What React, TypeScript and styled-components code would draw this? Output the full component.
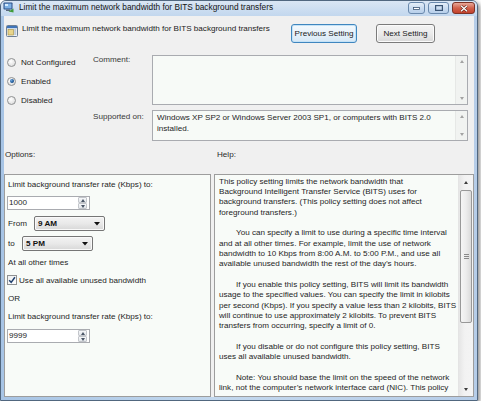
import React from "react";
import styled, { createGlobalStyle, css } from "styled-components";

const FONT = `"Liberation Sans", Arial, "Noto Sans", sans-serif`;

const Global = createGlobalStyle`
  html, body { margin: 0; padding: 0; background: #ffffff; }
  body { font-family: ${FONT}; font-size: 8.1px; color: #1e1e1e; }
  * { box-sizing: border-box; }
`;

/* ---------- window chrome ---------- */

const Window = styled.div`
  width: 478px;
  height: 401px;
  display: flex;
  flex-direction: column;
  border: 1px solid #51677f;
  border-radius: 6px 6px 0 0;
  background: linear-gradient(90deg, #a7c4e5 0%, #c3d8ee 45%, #b6cde8 100%);
  box-shadow: 2px 2px 4px rgba(0, 0, 0, 0.45);
  overflow: hidden;
`;

const TitleBar = styled.div`
  height: 15px;
  display: flex;
  align-items: flex-start;
  padding-left: 2px;
  background: linear-gradient(180deg, #dae6f4 0%, #c2d7ee 100%);
`;

const TitleIcon = styled.svg`
  width: 11px;
  height: 11px;
  margin-top: 1px;
  flex: none;
`;

const TitleText = styled.span`
  margin-left: 5px;
  line-height: 13px;
  font-size: 8.3px;
  color: #141414;
  white-space: nowrap;
`;

const CaptionButtons = styled.div`
  margin-left: auto;
  margin-top: 1px;
  padding-right: 2px;
  display: flex;
  gap: 3px;
`;

const CaptionButton = styled.div<{ $w: number; $close?: boolean }>`
  width: ${(p) => p.$w}px;
  height: 12px;
  display: flex;
  align-items: center;
  justify-content: center;
  border-radius: 3px;
  ${(p) =>
    p.$close
      ? css`
          border: 1px solid #7d3226;
          background: linear-gradient(180deg, #e8a99a 0%, #d2624c 50%, #c2412c 100%);
        `
      : css`
          border: 1px solid #6a89ad;
          background: linear-gradient(180deg, #e6eff9 0%, #cadcf0 50%, #b8cfea 100%);
        `}
`;

const Client = styled.div`
  flex: 1;
  min-height: 0;
  margin: 0 3px 3px 3px;
  background: #f0f0f0;
  display: flex;
  flex-direction: column;
`;

/* ---------- header ---------- */

const HeaderRow = styled.div`
  display: flex;
  align-items: flex-start;
  padding: 8px 39px 0 2px;
  height: 27px;
`;

const HeaderIcon = styled.svg`
  width: 12px;
  height: 12px;
  margin-top: 1px;
  flex: none;
`;

const HeaderText = styled.span`
  margin-left: 4px;
  flex: 1;
  line-height: 10px;
  white-space: nowrap;
  color: #222;
`;

const NavButtons = styled.div`
  display: flex;
  gap: 19px;
`;

const NavButton = styled.div<{ $w: number; $focused?: boolean }>`
  width: ${(p) => p.$w}px;
  height: 19px;
  display: flex;
  align-items: center;
  justify-content: center;
  border-radius: 3px;
  white-space: nowrap;
  color: #1a1a1a;
  ${(p) =>
    p.$focused
      ? css`
          border: 1px solid #3f86bf;
          background: linear-gradient(180deg, #f4f9fd 0%, #e7f1fa 50%, #d6e8f6 100%);
          box-shadow: inset 0 0 0 1px #c4e2f6;
        `
      : css`
          border: 1px solid #7b7b7b;
          background: linear-gradient(180deg, #f4f4f4 0%, #ebebeb 50%, #d9d9d9 100%);
          box-shadow: inset 0 0 0 1px #fbfbfb;
        `}
`;

/* ---------- state radios and fields ---------- */

const TopSection = styled.div`
  display: flex;
  margin-top: 12px;
`;

const RadioGroup = styled.div`
  width: 89px;
  padding-left: 3px;
  display: flex;
  flex-direction: column;
  gap: 5px;
`;

const RadioItem = styled.div`
  height: 14px;
  display: flex;
  align-items: center;
  gap: 5px;
  white-space: nowrap;
`;

const RadioCircle = styled.span<{ $checked?: boolean }>`
  width: 9px;
  height: 9px;
  border-radius: 50%;
  border: 1px solid #8f9192;
  background: radial-gradient(circle at 40% 35%, #ffffff 0%, #e6e6e6 60%, #cfd1d2 100%);
  display: flex;
  align-items: center;
  justify-content: center;
  flex: none;
  &::after {
    content: "";
    display: ${(p) => (p.$checked ? "block" : "none")};
    width: 4px;
    height: 4px;
    border-radius: 50%;
    background: radial-gradient(circle at 35% 35%, #6fa6dc 0%, #1d5a9b 55%, #0f3361 100%);
  }
`;

const FieldGrid = styled.div`
  display: grid;
  grid-template-columns: 59px 316px;
  row-gap: 5px;
`;

const FieldLabel = styled.div<{ $pt: number }>`
  padding-top: ${(p) => p.$pt}px;
  line-height: 10px;
  color: #383838;
  white-space: nowrap;
`;

const FieldBox = styled.div<{ $h: number }>`
  height: ${(p) => p.$h}px;
  border: 1px solid #a9abb0;
  background: #f7faf7;
  display: flex;
`;

const FieldText = styled.div`
  flex: 1;
  padding: 2px 0 0 4px;
  line-height: 10.5px;
  white-space: nowrap;
  color: #1e1e1e;
`;

const MiniScroll = styled.div`
  width: 12px;
  margin-left: auto;
  display: flex;
  flex-direction: column;
  justify-content: space-between;
  align-items: center;
  padding: 4px 0 4px;
  background: #f1f3f1;
  border-left: 1px solid #e6e8e6;
`;

const Arrow = styled.span<{ $dir: "up" | "down"; $color?: string }>`
  width: 0;
  height: 0;
  border-left: 2.5px solid transparent;
  border-right: 2.5px solid transparent;
  ${(p) =>
    p.$dir === "up"
      ? css`border-bottom: 3px solid ${p.$color ?? "#a3a3a3"};`
      : css`border-top: 3px solid ${p.$color ?? "#a3a3a3"};`}
`;

/* ---------- options and help ---------- */

const LabelsRow = styled.div`
  display: grid;
  grid-template-columns: 207px 1fr;
  column-gap: 3px;
  margin-top: 9px;
  line-height: 10px;
`;

const SectionLabel = styled.div<{ $pl: number }>`
  padding-left: ${(p) => p.$pl}px;
  color: #2a2a2a;
`;

const Panels = styled.div`
  flex: 1;
  min-height: 0;
  display: grid;
  grid-template-columns: 207px 1fr;
  column-gap: 3px;
  margin-top: 14px;
`;

const OptionsPanel = styled.div`
  border: 1px solid #9d9d9d;
  background: #f8fbf8;
  padding: 5px 3px 0 3px;
  display: flex;
  flex-direction: column;
`;

const OptionLine = styled.div<{ $mt?: number }>`
  margin-top: ${(p) => p.$mt ?? 0}px;
  line-height: 10px;
  white-space: nowrap;
  color: #1e1e1e;
`;

const Spin = styled.div<{ $mt: number }>`
  margin-top: ${(p) => p.$mt}px;
  margin-left: -1px;
  width: 83px;
  height: 14px;
  border: 1px solid #a9abb0;
  background: #ffffff;
  display: flex;
  align-items: center;
`;

const SpinValue = styled.span`
  flex: 1;
  padding-left: 1px;
  line-height: 12px;
`;

const SpinButtons = styled.div`
  width: 9px;
  height: 12px;
  margin-right: 2px;
  display: flex;
  flex-direction: column;
`;

const SpinHalf = styled.div`
  flex: 1;
  display: flex;
  align-items: center;
  justify-content: center;
  border: 1px solid #c3c6cb;
  border-radius: 1px;
  background: linear-gradient(180deg, #f6f7f9 0%, #e3e6ea 100%);
`;

const ComboRow = styled.div<{ $mt: number }>`
  margin-top: ${(p) => p.$mt}px;
  display: flex;
  align-items: center;
  height: 15px;
`;

const ComboLabel = styled.span<{ $w: number }>`
  width: ${(p) => p.$w}px;
  flex: none;
`;

const Combo = styled.div`
  width: 71px;
  height: 15px;
  border: 1px solid #767676;
  border-radius: 2px;
  background: linear-gradient(180deg, #f3f3f3 0%, #e9e9e9 50%, #d7d7d7 100%);
  box-shadow: inset 0 0 0 1px #f9f9f9;
  display: flex;
  align-items: center;
  padding: 0 4px 0 3px;
  font-weight: 700;
  color: #111;
`;

const ComboValue = styled.span`
  flex: 1;
`;

const CheckRow = styled.div<{ $mt: number }>`
  margin-top: ${(p) => p.$mt}px;
  margin-left: -1px;
  height: 10px;
  display: flex;
  align-items: center;
  gap: 2px;
  white-space: nowrap;
`;

const CheckBox = styled.span`
  width: 10px;
  height: 10px;
  flex: none;
  border: 1px solid #8f9192;
  background: linear-gradient(135deg, #eceef0 0%, #ffffff 100%);
  display: flex;
  align-items: center;
  justify-content: center;
`;

const HelpPanel = styled.div`
  border: 1px solid #9d9d9d;
  background: #f8fbf8;
  display: flex;
  overflow: hidden;
`;

const HelpText = styled.div`
  flex: 1;
  min-width: 0;
  padding: 1.5px 0 0 4px;
  overflow: hidden;
`;

const HelpLine = styled.div<{ $indent?: boolean }>`
  height: 10.35px;
  line-height: 10.35px;
  white-space: nowrap;
  padding-left: ${(p) => (p.$indent ? 17 : 0)}px;
  color: #1e1e1e;
`;

const ScrollBar = styled.div`
  width: 15px;
  flex: none;
  display: flex;
  flex-direction: column;
  background: linear-gradient(90deg, #e6e6e6 0%, #f2f2f2 40%, #f4f4f4 100%);
  border-left: 1px solid #e4e4e4;
`;

const ScrollArrow = styled.div`
  height: 14px;
  display: flex;
  align-items: center;
  justify-content: center;
`;

const Thumb = styled.div`
  margin: 1px 1px 0 1px;
  height: 133px;
  border: 1px solid #989898;
  border-radius: 2px;
  background: linear-gradient(90deg, #f5f5f5 0%, #ececec 50%, #dadada 100%);
  display: flex;
  flex-direction: column;
  align-items: center;
  justify-content: center;
  gap: 1px;
`;

const Grip = styled.span`
  width: 5px;
  height: 1px;
  background: #8a8a8a;
`;

const Track = styled.div`
  flex: 1;
`;

/* ---------- content ---------- */

const helpLines: { text: string; indent?: boolean }[] = [
  { text: "This policy setting limits the network bandwidth that" },
  { text: "Background Intelligent Transfer Service (BITS) uses for" },
  { text: "background transfers. (This policy setting does not affect" },
  { text: "foreground transfers.)" },
  { text: "" },
  { text: "You can specify a limit to use during a specific time interval", indent: true },
  { text: "and at all other times. For example, limit the use of network" },
  { text: "bandwidth to 10 Kbps from 8:00 A.M. to 5:00 P.M., and use all" },
  { text: "available unused bandwidth the rest of the day\u2019s hours." },
  { text: "" },
  { text: "If you enable this policy setting, BITS will limit its bandwidth", indent: true },
  { text: "usage to the specified values. You can specify the limit in kilobits" },
  { text: "per second (Kbps). If you specify a value less than 2 kilobits, BITS" },
  { text: "will continue to use approximately 2 kilobits. To prevent BITS" },
  { text: "transfers from occurring, specify a limit of 0." },
  { text: "" },
  { text: "If you disable or do not configure this policy setting, BITS", indent: true },
  { text: "uses all available unused bandwidth." },
  { text: "" },
  { text: "Note: You should base the limit on the speed of the network", indent: true },
  { text: "link, not the computer\u2019s network interface card (NIC). This policy" },
];

const PolicyIcon = () => (
  <TitleIcon viewBox="0 0 11 11">
    <rect x="0.5" y="0.5" width="9" height="7" rx="0.8" fill="#2b4f86" />
    <rect x="1.5" y="1.5" width="7" height="5" fill="#7fb2e5" />
    <rect x="2" y="2" width="3" height="2" fill="#d6ecff" />
    <rect x="3" y="7.5" width="4" height="1.5" fill="#5a6a7c" />
    <path d="M5.5 9.5 L10.5 6.5 L10.5 10.5 Z" fill="#3f9b3a" />
  </TitleIcon>
);

const SettingIcon = () => (
  <HeaderIcon viewBox="0 0 12 12">
    <rect x="0.5" y="0.5" width="11" height="11" rx="1" fill="#eef2f6" stroke="#6d7f94" />
    <rect x="1" y="1" width="10" height="2.2" fill="#3f74b8" />
    <rect x="2" y="4.5" width="5.5" height="5.5" fill="#e8d58c" stroke="#a08a3a" strokeWidth="0.6" />
    <rect x="8.2" y="4.5" width="2" height="1" fill="#8aa0b8" />
    <rect x="8.2" y="6.5" width="2" height="1" fill="#8aa0b8" />
    <rect x="8.2" y="8.5" width="2" height="1" fill="#8aa0b8" />
  </HeaderIcon>
);

const SpinControl = ({ value, mt }: { value: string; mt: number }) => (
  <Spin $mt={mt}>
    <SpinValue>{value}</SpinValue>
    <SpinButtons>
      <SpinHalf>
        <Arrow $dir="up" $color="#4a5566" />
      </SpinHalf>
      <SpinHalf>
        <Arrow $dir="down" $color="#4a5566" />
      </SpinHalf>
    </SpinButtons>
  </Spin>
);

const ComboArrow = () => (
  <svg width="6" height="4" viewBox="0 0 6 4">
    <path d="M0 0 H6 L3 3.5 Z" fill="#111" />
  </svg>
);

export default function App() {
  return (
    <>
      <Global />
      <Window>
        <TitleBar>
          <PolicyIcon />
          <TitleText>Limit the maximum network bandwidth for BITS background transfers</TitleText>
          <CaptionButtons>
            <CaptionButton $w={17}>
              <svg width="7" height="3" viewBox="0 0 7 3">
                <rect x="0.5" y="0.5" width="6" height="2" fill="#ffffff" stroke="#3b5575" strokeWidth="0.8" />
              </svg>
            </CaptionButton>
            <CaptionButton $w={21}>
              <svg width="8" height="6" viewBox="0 0 8 6">
                <rect x="0.6" y="0.6" width="6.8" height="4.8" fill="none" stroke="#3b5575" strokeWidth="1.2" />
              </svg>
            </CaptionButton>
            <CaptionButton $w={23} $close>
              <svg width="8" height="7" viewBox="0 0 8 7">
                <path d="M1 0.8 L7 6.2 M7 0.8 L1 6.2" stroke="#5a1f17" strokeWidth="2.4" />
                <path d="M1 0.8 L7 6.2 M7 0.8 L1 6.2" stroke="#ffffff" strokeWidth="1.3" />
              </svg>
            </CaptionButton>
          </CaptionButtons>
        </TitleBar>

        <Client>
          <HeaderRow>
            <SettingIcon />
            <HeaderText>Limit the maximum network bandwidth for BITS background transfers</HeaderText>
            <NavButtons>
              <NavButton $w={66} $focused>Previous Setting</NavButton>
              <NavButton $w={59}>Next Setting</NavButton>
            </NavButtons>
          </HeaderRow>

          <TopSection>
            <RadioGroup>
              <RadioItem>
                <RadioCircle />
                Not Configured
              </RadioItem>
              <RadioItem>
                <RadioCircle $checked />
                Enabled
              </RadioItem>
              <RadioItem>
                <RadioCircle />
                Disabled
              </RadioItem>
            </RadioGroup>

            <FieldGrid>
              <FieldLabel $pt={0}>Comment:</FieldLabel>
              <FieldBox $h={50}>
                <MiniScroll>
                  <Arrow $dir="up" />
                  <Arrow $dir="down" />
                </MiniScroll>
              </FieldBox>
              <FieldLabel $pt={2}>Supported on:</FieldLabel>
              <FieldBox $h={31}>
                <FieldText>
                  Windows XP SP2 or Windows Server 2003 SP1, or computers with BITS 2.0
                  <br />
                  installed.
                </FieldText>
                <MiniScroll>
                  <Arrow $dir="up" />
                  <Arrow $dir="down" />
                </MiniScroll>
              </FieldBox>
            </FieldGrid>
          </TopSection>

          <LabelsRow>
            <SectionLabel $pl={1}>Options:</SectionLabel>
            <SectionLabel $pl={3}>Help:</SectionLabel>
          </LabelsRow>

          <Panels>
            <OptionsPanel>
              <OptionLine>Limit background transfer rate (Kbps) to:</OptionLine>
              <SpinControl value="1000" mt={6} />
              <ComboRow $mt={6}>
                <ComboLabel $w={26}>From</ComboLabel>
                <Combo>
                  <ComboValue>9 AM</ComboValue>
                  <ComboArrow />
                </Combo>
              </ComboRow>
              <ComboRow $mt={5}>
                <ComboLabel $w={14}>to</ComboLabel>
                <Combo>
                  <ComboValue>5 PM</ComboValue>
                  <ComboArrow />
                </Combo>
              </ComboRow>
              <OptionLine $mt={7}>At all other times</OptionLine>
              <CheckRow $mt={7}>
                <CheckBox>
                  <svg width="8" height="8" viewBox="0 0 8 8">
                    <path d="M1.2 4.2 L3.2 6.4 L6.9 1.2" fill="none" stroke="#21406e" strokeWidth="1.5" />
                  </svg>
                </CheckBox>
                Use all available unused bandwidth
              </CheckRow>
              <OptionLine $mt={9}>OR</OptionLine>
              <OptionLine $mt={8}>Limit background transfer rate (Kbps) to:</OptionLine>
              <SpinControl value="9999" mt={7} />
            </OptionsPanel>

            <HelpPanel>
              <HelpText>
                {helpLines.map((l, i) => (
                  <HelpLine key={i} $indent={l.indent}>
                    {l.text || "\u00a0"}
                  </HelpLine>
                ))}
              </HelpText>
              <ScrollBar>
                <ScrollArrow>
                  <Arrow $dir="up" $color="#3d3d3d" />
                </ScrollArrow>
                <Thumb>
                  <Grip />
                  <Grip />
                  <Grip />
                </Thumb>
                <Track />
                <ScrollArrow>
                  <Arrow $dir="down" $color="#3d3d3d" />
                </ScrollArrow>
              </ScrollBar>
            </HelpPanel>
          </Panels>
        </Client>
      </Window>
    </>
  );
}
